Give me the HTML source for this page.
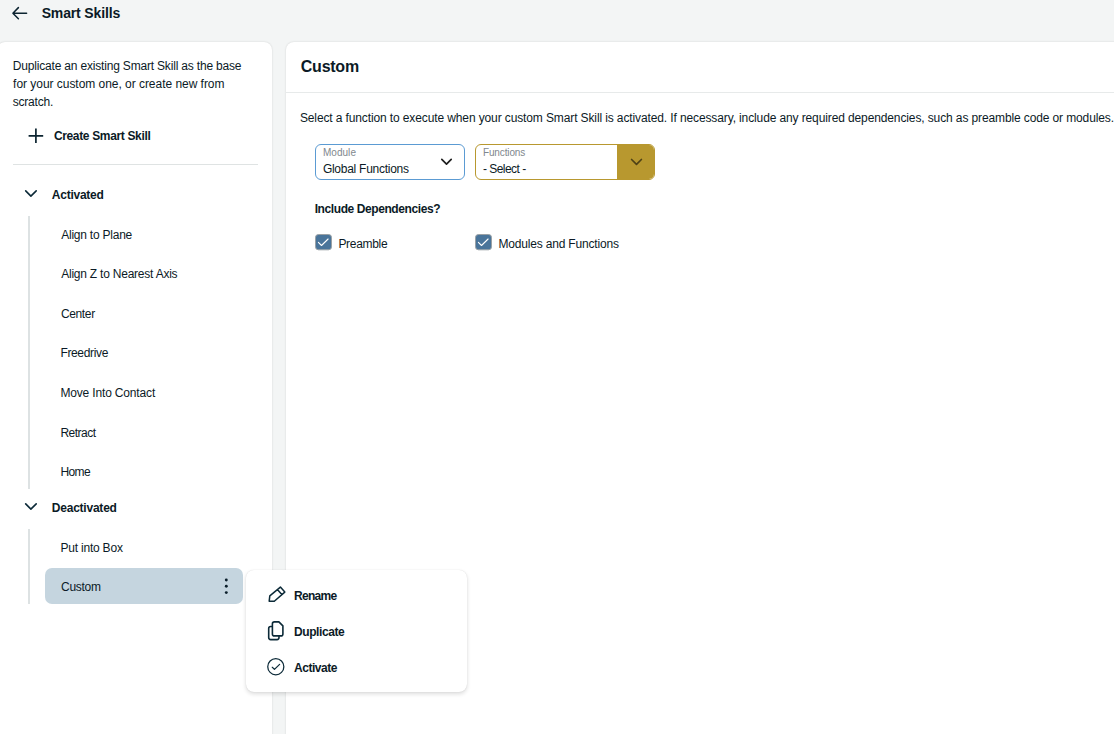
<!DOCTYPE html>
<html><head><meta charset="utf-8">
<style>
*{box-sizing:border-box;margin:0;padding:0}
html,body{width:1114px;height:734px;overflow:hidden;background:#f3f5f5;font-family:"Liberation Sans",sans-serif;color:#0b1a26}
.t{position:absolute;white-space:nowrap;line-height:20px}
.a{position:absolute}
svg{position:absolute;overflow:visible}
</style></head><body>
<div class="a" style="left:-3px;top:42px;width:275px;height:720px;background:#fff;border-radius:8px;box-shadow:0 0 2px rgba(0,0,0,.16)"></div>
<div class="a" style="left:286px;top:42px;width:900px;height:720px;background:#fff;border-radius:8px;box-shadow:0 0 2px rgba(0,0,0,.16)"></div>

<svg style="left:0;top:0" width="40" height="26" viewBox="0 0 40 26"><path d="M18.4 7.6 L12.9 13.2 L18.4 18.7 M12.9 13.2 H26.6" fill="none" stroke="#0c2431" stroke-width="1.5" stroke-linecap="round" stroke-linejoin="round"/></svg>

<div class="a" style="left:13px;top:164px;width:245px;height:1px;background:#dfe3e3"></div>
<svg style="left:0;top:0" width="50" height="150" viewBox="0 0 50 150"><path d="M35.9 128.6 V142.9 M28.6 135.8 H43.2" stroke="#0c2431" stroke-width="1.7"/></svg>

<svg style="left:0;top:0" width="50" height="520" viewBox="0 0 50 520"><path d="M25.7 190.9 L30.9 196.1 L36.2 190.9" fill="none" stroke="#0c2a38" stroke-width="1.6" stroke-linecap="round" stroke-linejoin="round"/><path d="M25.7 503.9 L30.9 509.1 L36.2 503.9" fill="none" stroke="#0c2a38" stroke-width="1.6" stroke-linecap="round" stroke-linejoin="round"/></svg>
<div class="a" style="left:28px;top:216px;width:2px;height:273px;background:#dde2e3"></div>
<div class="a" style="left:28px;top:529px;width:2px;height:75px;background:#dde2e3"></div>
<div class="a" style="left:45px;top:568px;width:198px;height:36px;background:#c5d5df;border-radius:7px"></div>
<svg style="left:0;top:0" width="240" height="600" viewBox="0 0 240 600"><circle cx="226.3" cy="580" r="1.45" fill="#0b1f2b"/><circle cx="226.3" cy="586.3" r="1.45" fill="#0b1f2b"/><circle cx="226.3" cy="592.6" r="1.45" fill="#0b1f2b"/></svg>

<div class="a" style="left:286px;top:92px;width:828px;height:1px;background:#e7eaea"></div>
<div class="a" style="left:315px;top:144px;width:150px;height:36px;border:1px solid #5b9bd3;border-radius:6px;background:#fff"></div>
<svg style="left:0;top:0" width="460" height="180" viewBox="0 0 460 180"><path d="M441.8 159.4 L446.5 164.1 L451.2 159.4" fill="none" stroke="#1e1e1e" stroke-width="1.7" stroke-linecap="round" stroke-linejoin="round"/></svg>
<div class="a" style="left:475px;top:144px;width:180px;height:36px;border:1px solid #b8982f;border-radius:6px;background:#fff;overflow:hidden"><div class="a" style="left:141px;top:0;width:38px;height:34px;background:#b8982f"></div></div>
<svg style="left:0;top:0" width="660" height="180" viewBox="0 0 660 180"><path d="M631.6 159.5 L636.5 164.3 L641.4 159.5" fill="none" stroke="#4f4216" stroke-width="1.7" stroke-linecap="round" stroke-linejoin="round"/></svg>

<svg style="left:315px;top:234px" width="17" height="16" viewBox="0 0 17 16"><rect x="0.5" y="0.5" width="16" height="15.3" rx="3" fill="#49749a" stroke="#9aa1a5" stroke-width="1"/><path d="M3.4 8.4 L6.5 11.5 L13.1 5.0" fill="none" stroke="#fff" stroke-width="1.1" stroke-linecap="round" stroke-linejoin="round"/></svg>
<svg style="left:475px;top:234px" width="17" height="16" viewBox="0 0 17 16"><rect x="0.5" y="0.5" width="16" height="15.3" rx="3" fill="#49749a" stroke="#9aa1a5" stroke-width="1"/><path d="M3.4 8.4 L6.5 11.5 L13.1 5.0" fill="none" stroke="#fff" stroke-width="1.1" stroke-linecap="round" stroke-linejoin="round"/></svg>

<div class="a" style="left:246px;top:570px;width:221px;height:122px;background:#fff;border-radius:8px;box-shadow:0 0 1px rgba(0,0,0,.14),0 2px 4px rgba(0,0,0,.14)"></div>
<svg style="left:264px;top:582px" width="26" height="24" viewBox="0 0 26 24"><path d="M5.8 13.8 L16.4 5.1 L20.8 10.1 L10.3 19.2 L5.2 19.2 Z M13.4 7.6 L17.8 12.6" fill="none" stroke="#0c2a38" stroke-width="1.5" stroke-linejoin="round" stroke-linecap="round"/></svg>
<svg style="left:264px;top:617px" width="26" height="26" viewBox="0 0 26 26"><path d="M8.4 6.9 Q8.4 4.9 10.4 4.9 H14.9 L18.9 8.9 V16.9 Q18.9 18.9 16.9 18.9 H10.4 Q8.4 18.9 8.4 16.9 Z" fill="none" stroke="#0c2a38" stroke-width="1.6" stroke-linejoin="round"/><path d="M8.4 9.5 H6.7 Q4.7 9.5 4.7 11.5 V20.6 Q4.7 22.6 6.7 22.6 H13 Q15 22.6 15 20.6 V19" fill="none" stroke="#0c2a38" stroke-width="1.6" stroke-linejoin="round"/></svg>
<svg style="left:264px;top:654px" width="26" height="26" viewBox="0 0 26 26"><circle cx="11.8" cy="12.7" r="8.05" fill="none" stroke="#0c2a38" stroke-width="1.25"/><path d="M8.3 13.3 L10.45 15.4 L15.6 10.4" fill="none" stroke="#0c2a38" stroke-width="1.25" stroke-linecap="round" stroke-linejoin="round"/></svg>

<div class="t" style="left:12.8px;top:56px;font-size:12px;letter-spacing:-0.184px">Duplicate an existing Smart Skill as the base</div>
<div class="t" style="left:13.1px;top:74px;font-size:12px;letter-spacing:-0.036px">for your custom one, or create new from</div>
<div class="t" style="left:12.8px;top:92px;font-size:12px;letter-spacing:-0.225px">scratch.</div>
<div class="t" style="left:61.2px;top:225px;font-size:12px;letter-spacing:-0.229px">Align to Plane</div>
<div class="t" style="left:61.2px;top:264px;font-size:12px;letter-spacing:-0.225px">Align Z to Nearest Axis</div>
<div class="t" style="left:60.9px;top:304px;font-size:12px;letter-spacing:-0.344px">Center</div>
<div class="t" style="left:60.4px;top:343px;font-size:12px;letter-spacing:-0.339px">Freedrive</div>
<div class="t" style="left:60.4px;top:383px;font-size:12px;letter-spacing:-0.159px">Move Into Contact</div>
<div class="t" style="left:60.4px;top:423px;font-size:12px;letter-spacing:-0.491px">Retract</div>
<div class="t" style="left:60.4px;top:462px;font-size:12px;letter-spacing:-0.612px">Home</div>
<div class="t" style="left:60.4px;top:538px;font-size:12px;letter-spacing:-0.2px">Put into Box</div>
<div class="t" style="left:61.0px;top:577px;font-size:12px;letter-spacing:-0.27px">Custom</div>
<div class="t" style="left:299.9px;top:108px;font-size:12px;letter-spacing:-0.118px">Select a function to execute when your custom Smart Skill is activated. If necessary, include any required dependencies, such as preamble code or modules.</div>
<div class="t" style="left:322.9px;top:159px;font-size:12px;letter-spacing:-0.263px">Global Functions</div>
<div class="t" style="left:482.9px;top:159px;font-size:12px;letter-spacing:-0.524px">- Select -</div>
<div class="t" style="left:338.4px;top:234px;font-size:12px;letter-spacing:-0.3px">Preamble</div>
<div class="t" style="left:498.4px;top:234px;font-size:12px;letter-spacing:-0.174px">Modules and Functions</div>
<div class="t" style="left:322.9px;top:143px;font-size:10px;letter-spacing:0.05px;color:#7f888e">Module</div>
<div class="t" style="left:482.9px;top:143px;font-size:10px;letter-spacing:-0.12px;color:#7f888e">Functions</div>
<div class="t" style="left:41.7px;top:3px;font-size:14px;letter-spacing:-0.151px;font-weight:bold">Smart Skills</div>
<div class="t" style="left:53.9px;top:126px;font-size:12px;letter-spacing:-0.346px;font-weight:bold">Create Smart Skill</div>
<div class="t" style="left:51.8px;top:185px;font-size:12px;letter-spacing:-0.248px;font-weight:bold">Activated</div>
<div class="t" style="left:51.8px;top:498px;font-size:12px;letter-spacing:-0.224px;font-weight:bold">Deactivated</div>
<div class="t" style="left:314.7px;top:199px;font-size:12px;letter-spacing:-0.41px;font-weight:bold">Include Dependencies?</div>
<div class="t" style="left:300.8px;top:57px;font-size:16px;letter-spacing:-0.246px;font-weight:bold">Custom</div>
<div class="t" style="left:294.0px;top:586px;font-size:12px;letter-spacing:-0.683px;font-weight:bold">Rename</div>
<div class="t" style="left:294.0px;top:622px;font-size:12px;letter-spacing:-0.405px;font-weight:bold">Duplicate</div>
<div class="t" style="left:294.0px;top:658px;font-size:12px;letter-spacing:-0.459px;font-weight:bold">Activate</div>
</body></html>
